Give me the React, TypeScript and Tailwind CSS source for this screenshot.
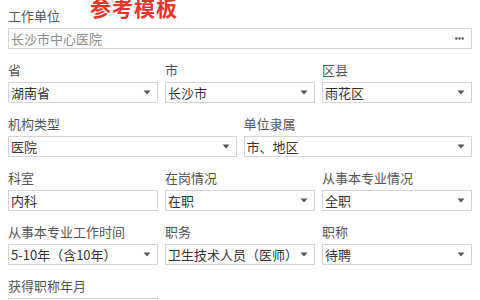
import { ReactNode } from "react";

type Field = {
  label: string;
  value: string;
  kind: "select" | "input" | "picker";
  muted?: boolean;
};

const rows: { cols: 1 | 2 | 3; fields: Field[] }[] = [
  { cols: 1, fields: [{ label: "工作单位", value: "长沙市中心医院", kind: "picker", muted: true }] },
  {
    cols: 3,
    fields: [
      { label: "省", value: "湖南省", kind: "select" },
      { label: "市", value: "长沙市", kind: "select" },
      { label: "区县", value: "雨花区", kind: "select" },
    ],
  },
  {
    cols: 2,
    fields: [
      { label: "机构类型", value: "医院", kind: "select" },
      { label: "单位隶属", value: "市、地区", kind: "select" },
    ],
  },
  {
    cols: 3,
    fields: [
      { label: "科室", value: "内科", kind: "input" },
      { label: "在岗情况", value: "在职", kind: "select" },
      { label: "从事本专业情况", value: "全职", kind: "select" },
    ],
  },
  {
    cols: 3,
    fields: [
      { label: "从事本专业工作时间", value: "5-10年（含10年）", kind: "select" },
      { label: "职务", value: "卫生技术人员（医师）", kind: "select" },
      { label: "职称", value: "待聘", kind: "select" },
    ],
  },
  { cols: 3, fields: [{ label: "获得职称年月", value: "", kind: "input" }] },
];

function Caret() {
  return (
    <svg width="8" height="5" viewBox="0 0 8 5" className="shrink-0">
      <path d="M0.5 0.5 H7.5 L4 4.5 Z" fill="#555" />
    </svg>
  );
}

function Dots() {
  return (
    <svg width="9" height="3" viewBox="0 0 9 3" className="mr-[1px] shrink-0">
      <circle cx="1.3" cy="1.5" r="1.2" fill="#555" />
      <circle cx="4.5" cy="1.5" r="1.2" fill="#555" />
      <circle cx="7.7" cy="1.5" r="1.2" fill="#555" />
    </svg>
  );
}

function Box({ field }: { field: Field }) {
  let tail: ReactNode = null;
  if (field.kind === "select") tail = <Caret />;
  if (field.kind === "picker") tail = <Dots />;
  return (
    <div className="mt-1 flex h-[21px] items-center justify-between border border-[#d5d5d5] bg-white pl-[2px] pr-[6px]">
      <span className={`truncate text-[13px] leading-[19px] ${field.muted ? "text-[#8a8a8a]" : "text-[#333]"}`}>
        {field.value}
      </span>
      {tail}
    </div>
  );
}

export default function App() {
  return (
    <div
      className="relative h-[300px] w-[480px] overflow-hidden bg-white px-2 pt-2"
      style={{ fontFamily: '"Noto Sans CJK SC", "Noto Sans", sans-serif' }}
    >
      <div className="absolute left-[90px] top-[-8px] text-[21px] font-bold tracking-[1px] text-[#e8362d]">
        参考模板
      </div>
      {rows.map((row, i) => (
        <div
          key={i}
          className={`mb-[13px] grid gap-[7px] ${
            row.cols === 1 ? "grid-cols-1" : row.cols === 2 ? "grid-cols-2" : "grid-cols-3"
          }`}
        >
          {row.fields.map((f) => (
            <div key={f.label}>
              <div className="h-4 text-[13px] leading-4 text-[#555]">{f.label}</div>
              <Box field={f} />
            </div>
          ))}
        </div>
      ))}
    </div>
  );
}
